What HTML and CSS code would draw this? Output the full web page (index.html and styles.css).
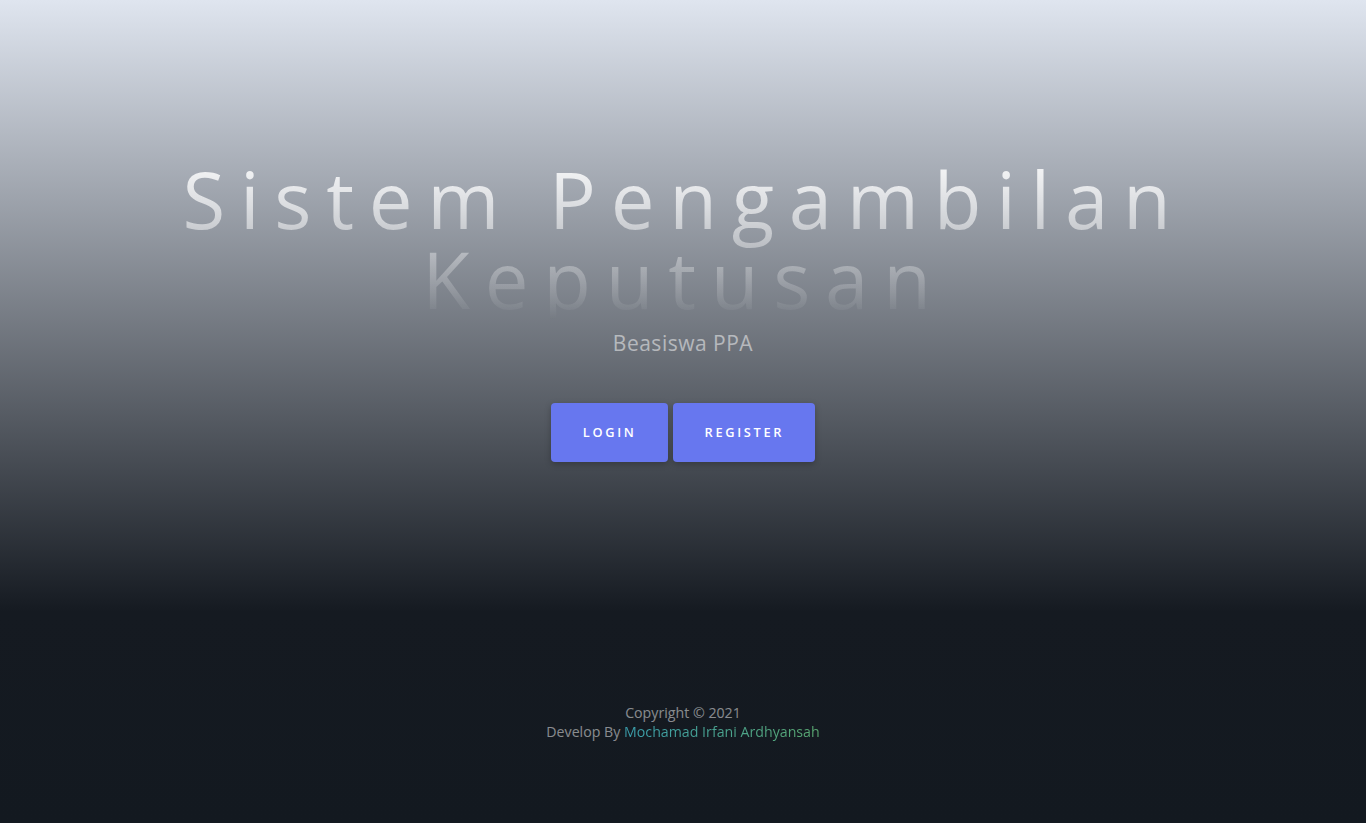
FILE: index.html
```html
<!DOCTYPE html>
<html lang="id">
<head>
<meta charset="utf-8">
<title>Sistem Pengambilan Keputusan</title>
<link rel="stylesheet" href="styles.css">
</head>
<body>
<header class="masthead">
  <div class="container">
    <h1 class="title">Sistem Pengambilan Keputusan</h1>
    <h2 class="subtitle">Beasiswa PPA</h2>
    <div class="actions">
      <a class="btn" href="#">Login</a>
      <a class="btn" href="#">Register</a>
    </div>
  </div>
</header>
<footer class="footer">
  <div class="copy">Copyright © 2021</div>
  <div class="dev">Develop By <span class="name">Mochamad Irfani Ardhyansah</span></div>
</footer>
</body>
</html>
```
FILE: styles.css
```css
html, body {
  margin: 0;
  padding: 0;
}
body {
  min-height: 100vh;
  font-family: "Open Sans", "Noto Sans", sans-serif;
  background: linear-gradient(to bottom, #dfe5ef 0px, #151a21 612px, #131920 823px);
  background-color: #131920;
  display: flex;
  flex-direction: column;
}
.masthead {
  display: flex;
  justify-content: center;
  padding-top: 159px;
}
.container {
  width: 1110px;
  display: flex;
  flex-direction: column;
  align-items: center;
  text-align: center;
}
.title {
  margin: 0;
  width: 100%;
  font-family: "Open Sans", sans-serif;
  font-weight: 400;
  font-size: 78px;
  line-height: 80px;
  letter-spacing: 14.7px;
  padding-left: 2px;
  box-sizing: border-box;
  background: linear-gradient(rgba(255,255,255,0.9), rgba(255,255,255,0));
  -webkit-background-clip: text;
  background-clip: text;
  color: transparent;
}
.subtitle {
  margin: 15px 0 0;
  font-weight: 400;
  font-size: 21px;
  line-height: 18px;
  letter-spacing: 0.5px;
  color: rgba(255,255,255,0.5);
}
.actions {
  display: flex;
  gap: 5px;
  margin-top: 51px;
}
.btn {
  display: block;
  background: #6777ef;
  color: #fff;
  text-decoration: none;
  text-transform: uppercase;
  font-size: 12.8px;
  font-weight: 600;
  line-height: 19.2px;
  letter-spacing: 2.7px;
  padding: 20px 31px 20px 32px;
  border-radius: 4px;
  box-shadow: 0 2px 6px rgba(0,0,0,0.25);
}
.footer {
  margin-top: auto;
  padding: 0 0 82px;
  text-align: center;
  font-size: 14.2px;
  line-height: 19px;
  color: rgba(255,255,255,0.5);
}
.name {
  background: linear-gradient(to right, #3a9fae, #5aa870);
  -webkit-background-clip: text;
  background-clip: text;
  color: transparent;
}
```
